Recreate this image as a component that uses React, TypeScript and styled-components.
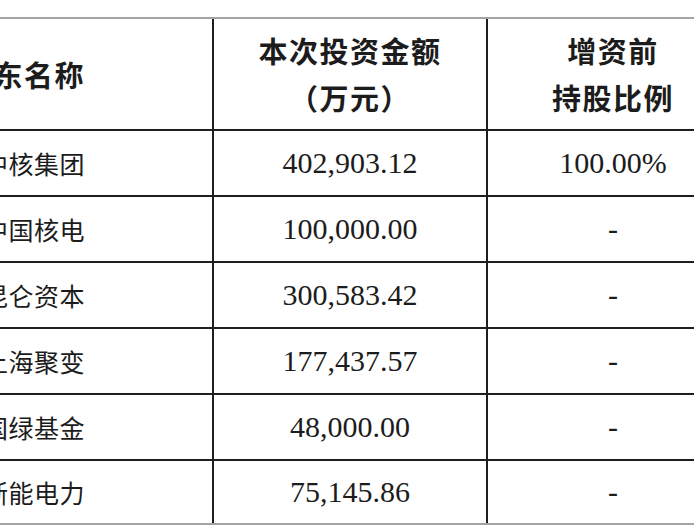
import React from "react";
import styled, { createGlobalStyle } from "styled-components";

const Global = createGlobalStyle`
  html, body { margin: 0; padding: 0; background: #ffffff; }
  body { overflow: hidden; width: 694px; height: 532px; }
`;

const Page = styled.div`
  width: 694px;
  height: 532px;
  overflow: hidden;
  position: relative;
  padding-top: 17px;
  box-sizing: border-box;
`;

const Table = styled.div`
  margin-left: -167px;
  width: 905px;
  border-top: 2px solid #a3a3a3;
  border-bottom: 2px solid #a3a3a3;
  color: #1c1c1c;
`;

const Row = styled.div<{ $head?: boolean }>`
  display: grid;
  grid-template-columns: 379px 274px 252px;
  height: ${(p) => (p.$head ? "110px" : "64px")};
  border-top: ${(p) => (p.$head ? "none" : "2px solid #1e1e1e")};
  &:last-child {
    height: 62px;
  }
`;

const Cell = styled.div<{ $first?: boolean }>`
  display: flex;
  flex-direction: column;
  justify-content: center;
  align-items: ${(p) => (p.$first ? "flex-end" : "center")};
  padding-right: ${(p) => (p.$first ? "127px" : "0")};
  border-left: ${(p) => (p.$first ? "none" : "2px solid #1e1e1e")};
  box-sizing: border-box;
  white-space: nowrap;
  overflow: hidden;
`;

const HeadText = styled.div`
  font-family: "Noto Sans CJK SC", sans-serif;
  font-weight: 700;
  font-size: 29px;
  letter-spacing: 1.5px;
  line-height: 47px;
  text-align: center;
`;

const NameText = styled.div`
  font-family: "Noto Sans CJK SC", sans-serif;
  font-weight: 400;
  font-size: 25px;
  letter-spacing: 0.5px;
  line-height: 32px;
`;

const NumText = styled.div`
  font-family: "Liberation Serif", "Times New Roman", serif;
  font-size: 30px;
  line-height: 34px;
`;

const rows = [
  { name: "中核集团", amount: "402,903.12", ratio: "100.00%" },
  { name: "中国核电", amount: "100,000.00", ratio: "-" },
  { name: "昆仑资本", amount: "300,583.42", ratio: "-" },
  { name: "上海聚变", amount: "177,437.57", ratio: "-" },
  { name: "国绿基金", amount: "48,000.00", ratio: "-" },
  { name: "浙能电力", amount: "75,145.86", ratio: "-" },
];

export default function App() {
  return (
    <>
      <Global />
      <Page>
        <Table>
          <Row $head>
            <Cell $first>
              <HeadText>股东名称</HeadText>
            </Cell>
            <Cell>
              <HeadText>本次投资金额</HeadText>
              <HeadText>（万元）</HeadText>
            </Cell>
            <Cell>
              <HeadText>增资前</HeadText>
              <HeadText>持股比例</HeadText>
            </Cell>
          </Row>
          {rows.map((r) => (
            <Row key={r.name}>
              <Cell $first>
                <NameText>{r.name}</NameText>
              </Cell>
              <Cell>
                <NumText>{r.amount}</NumText>
              </Cell>
              <Cell>
                <NumText>{r.ratio}</NumText>
              </Cell>
            </Row>
          ))}
        </Table>
      </Page>
    </>
  );
}
